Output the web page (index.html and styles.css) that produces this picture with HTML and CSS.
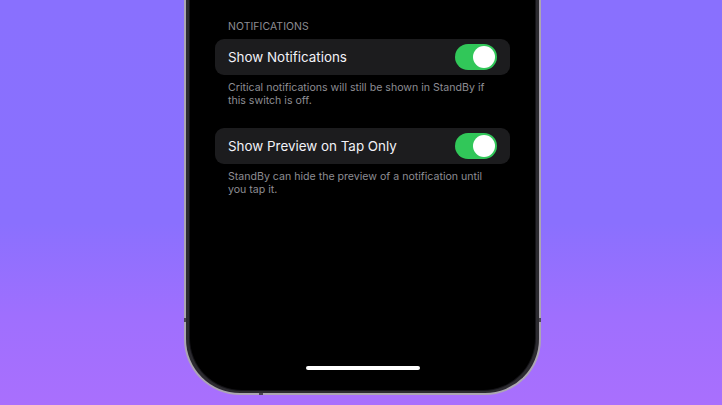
FILE: index.html
```html
<!DOCTYPE html>
<html lang="en">
<head>
  <meta charset="UTF-8">
  <title>StandBy Notifications</title>
  <link rel="stylesheet" href="styles.css">
</head>
<body>

  <div class="stage">
    <div class="phone">
      <span class="band band-left"></span>
      <span class="band band-right"></span>
      <span class="band band-bottom"></span>

      <div class="screen">
        <div class="settings">
          <div class="group-title">NOTIFICATIONS</div>

          <div class="cell">
            <span class="cell-label">Show Notifications</span>
            <span class="switch on"><span class="knob"></span></span>
          </div>
          <p class="group-footer">Critical notifications will still be shown in StandBy if this switch is off.</p>

          <div class="cell">
            <span class="cell-label">Show Preview on Tap Only</span>
            <span class="switch on"><span class="knob"></span></span>
          </div>
          <p class="group-footer">StandBy can hide the preview of a notification until you tap it.</p>
        </div>

        <div class="home-indicator"></div>
      </div>
    </div>
  </div>

</body>
</html>
```

FILE: styles.css
```css
* {
  box-sizing: border-box;
}

body {
  margin: 0;
  padding: 0;
  width: 722px;
  height: 405px;
  overflow: hidden;
  background: linear-gradient(180deg, #8970fe 0%, #8a70fe 55%, #9f6ffe 78%, #a96ffd 100%);
  font-family: Inter, "Noto Sans", sans-serif;
}

.stage {
  display: flex;
  justify-content: center;
  padding-left: 3px;
}

/* phone body: thin bright rim, dark bezel, black screen */
.phone {
  position: relative;
  width: 357px;
  height: 395px;
  border: 2px solid #aca6b2;
  border-top: none;
  border-radius: 0 0 56px 56px;
  background: #2c2b30;
  padding: 0 4px 3px;
}

.band {
  position: absolute;
  background: #4b4650;
}

.band-left {
  left: -2px;
  top: 318px;
  width: 2px;
  height: 4px;
}

.band-right {
  right: -2px;
  top: 318px;
  width: 2px;
  height: 4px;
}

.band-bottom {
  bottom: -2px;
  left: 73px;
  width: 4px;
  height: 2px;
}

.screen {
  height: 100%;
  background: #000;
  border-radius: 0 0 52px 52px;
  box-shadow: 0 0 0 1px #151418;
  display: flex;
  flex-direction: column;
  align-items: center;
}

.settings {
  width: 100%;
  padding: 20px 25px 0;
}

.group-title {
  padding-left: 13px;
  font-size: 10.4px;
  letter-spacing: 0.1px;
  color: #8d8d93;
  line-height: 13px;
  margin-bottom: 6px;
}

.cell {
  display: flex;
  align-items: center;
  justify-content: space-between;
  height: 36px;
  padding: 0 13px;
  background: #1c1c1e;
  border-radius: 9px;
}

.cell-label {
  font-size: 13.4px;
  color: #f2f2f7;
}

.switch {
  display: flex;
  align-items: center;
  width: 42px;
  height: 26px;
  padding: 2px;
  border-radius: 13px;
  background: #3a3a3c;
}

.switch.on {
  background: #31c759;
  justify-content: flex-end;
}

.knob {
  width: 22px;
  height: 22px;
  border-radius: 50%;
  background: #fff;
}

.group-footer {
  margin: 6px 0 0;
  padding: 0 20px 0 13px;
  font-size: 10.6px;
  line-height: 13px;
  color: #8d8d93;
  height: 47px;
}

.home-indicator {
  margin-top: auto;
  margin-bottom: 20px;
  width: 114px;
  height: 4px;
  border-radius: 2px;
  background: #fff;
}
```
